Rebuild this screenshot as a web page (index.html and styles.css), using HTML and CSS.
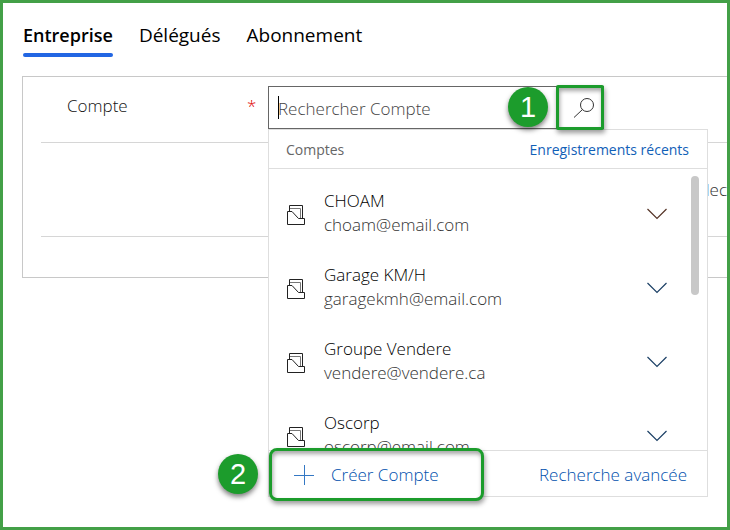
FILE: index.html
```html
<!DOCTYPE html>
<html lang="fr">
<head>
    <meta charset="UTF-8">
    <meta name="viewport" content="width=device-width, initial-scale=1.0">
    <title>Entreprise</title>
    <link rel="stylesheet" href="styles.css">
</head>
<body>
    <svg class="defs" width="0" height="0" aria-hidden="true">
        <symbol id="icon-account" viewBox="0 0 20 22">
            <path d="M3.500 7V1.500H16.500V14" />
            <path class="grey" d="M4 4.500H14.500V14" />
            <path d="M1.500 20.500V7.500H6L12.500 14.500H18.500V20.500Z" />
        </symbol>
        <symbol id="icon-chevron" viewBox="0 0 20 12">
            <path d="M0.500 1L10 10.500L19.500 1" />
        </symbol>
    </svg>
    <div class="page">
        <nav class="tabs">
            <a href="#entreprise" class="tab active">Entreprise</a>
            <a href="#delegues" class="tab">Délégués</a>
            <a href="#abonnement" class="tab">Abonnement</a>
        </nav>
        <main class="panel">
            <div class="row row-account">
                <label class="label" for="compte">Compte</label>
                <span class="required">*</span>
                <div class="lookup">
                    <div class="search">
                        <input type="text" id="compte" placeholder="Rechercher Compte">
                        <span class="step step-search">1</span>
                        <button class="search-button" aria-label="Rechercher">
                            <svg width="22" height="22" viewBox="0 0 22 22"><circle cx="14" cy="8" r="6.500" /><path d="M9.500 12.500L1 20.500" /></svg>
                        </button>
                    </div>
                    <div class="dropdown">
                        <div class="dropdown-header">
                            <span>Comptes</span>
                            <a href="#recents">Enregistrements récents</a>
                        </div>
                        <div class="results">
                            <div class="result">
                                <svg class="account" width="20" height="22"><use href="#icon-account" /></svg>
                                <div class="result-text">
                                    <div class="name">CHOAM</div>
                                    <div class="email">choam@email.com</div>
                                </div>
                                <svg class="chevron warm" width="20" height="12"><use href="#icon-chevron" /></svg>
                            </div>
                            <div class="result">
                                <svg class="account" width="20" height="22"><use href="#icon-account" /></svg>
                                <div class="result-text">
                                    <div class="name">Garage KM/H</div>
                                    <div class="email">garagekmh@email.com</div>
                                </div>
                                <svg class="chevron" width="20" height="12"><use href="#icon-chevron" /></svg>
                            </div>
                            <div class="result">
                                <svg class="account" width="20" height="22"><use href="#icon-account" /></svg>
                                <div class="result-text">
                                    <div class="name">Groupe Vendere</div>
                                    <div class="email">vendere@vendere.ca</div>
                                </div>
                                <svg class="chevron" width="20" height="12"><use href="#icon-chevron" /></svg>
                            </div>
                            <div class="result">
                                <svg class="account" width="20" height="22"><use href="#icon-account" /></svg>
                                <div class="result-text">
                                    <div class="name">Oscorp</div>
                                    <div class="email">oscorp@email.com</div>
                                </div>
                                <svg class="chevron" width="20" height="12"><use href="#icon-chevron" /></svg>
                            </div>
                            <span class="scrollbar"></span>
                        </div>
                        <div class="dropdown-footer">
                            <button class="create">
                                <svg width="20" height="20" viewBox="0 0 20 20"><path d="M10.500 0V20M0 10.500H20" /></svg>
                                Créer Compte
                            </button>
                            <a href="#avancee">Recherche avancée</a>
                            <span class="step step-create">2</span>
                        </div>
                    </div>
                </div>
            </div>
            <div class="row row-select">
                <span>lec</span>
            </div>
        </main>
    </div>
</body>
</html>
```
FILE: styles.css
```css
* {
    box-sizing: border-box;
}
body {
    margin: 0;
    font-family: 'Open Sans', 'Noto Sans', sans-serif;
    font-weight: 300;
    font-size: 17px;
    line-height: 24px;
    color: #222;
    background-color: #fff;
}
a {
    color: #0050ad;
    text-decoration: none;
}
svg {
    display: block;
    flex: none;
    fill: none;
}
.defs {
    position: absolute;
}
.page {
    min-height: 100vh;
    border: 3px solid #43a047;
    padding: 20px 0 0 20px;
    overflow: hidden;
}
.tabs {
    display: flex;
    gap: 26px;
    margin-bottom: 19px;
}
.tab {
    color: #000;
    font-size: 19px;
    font-weight: 400;
    padding-bottom: 10px;
}
.tab.active {
    position: relative;
    font-size: 18px;
    font-weight: 600;
}
.tab.active::after {
    content: "";
    position: absolute;
    left: 0;
    right: 0;
    bottom: 0;
    height: 4px;
    border-radius: 2px;
    background-color: #2266e3;
}
.panel {
    margin-left: -1px;
    border: 1px solid #c8c8c8;
    border-right: none;
    padding: 0 0 40px 18px;
}
.row {
    display: flex;
    border-bottom: 1px solid #d6d6d6;
}
.row-account {
    height: 66px;
    padding-top: 9px;
}
.row-select {
    height: 94px;
    align-items: center;
    justify-content: flex-end;
    color: #333;
}
.label {
    width: 206px;
    padding: 8px 0 0 26px;
    color: #111;
}
.required {
    width: 21px;
    padding-top: 8px;
    color: #e00000;
}
.lookup {
    position: relative;
    width: 336px;
}
.search {
    position: relative;
    display: flex;
    height: 43px;
    background-color: #fff;
    border: 1px solid #666;
    border-right: none;
}
.search::before {
    content: "";
    position: absolute;
    left: 9px;
    top: 9px;
    width: 1px;
    height: 23px;
    background-color: #000;
}
.search input {
    flex: 1;
    min-width: 0;
    border: none;
    outline: none;
    padding: 2px 0 0 9px;
    font: inherit;
    background-color: transparent;
}
.search input::placeholder {
    color: #444;
    opacity: 1;
}
.search-button {
    display: flex;
    align-items: center;
    justify-content: center;
    width: 48px;
    margin: -2px 0;
    padding: 0 0 0 7px;
    background-color: #fff;
    border: 3px solid #1c9c2c;
    border-radius: 2px;
    box-shadow: 1px 3px 5px rgba(0, 0, 0, 0.4), inset 1px 3px 4px rgba(0, 0, 0, 0.35);
    z-index: 2;
}
.search-button svg {
    stroke: #333;
}
.step {
    position: absolute;
    width: 40px;
    height: 40px;
    border-radius: 50%;
    background-color: #1c9c2c;
    box-shadow: 0 3px 5px rgba(0, 0, 0, 0.5);
    color: #fff;
    font-family: 'Liberation Sans', sans-serif;
    font-size: 29px;
    font-weight: 400;
    line-height: 40px;
    text-align: center;
    z-index: 2;
}
.step-search {
    right: 56px;
    top: 0;
}
.step-create {
    left: -51px;
    top: 3px;
}
.dropdown {
    position: absolute;
    left: 0;
    top: 43px;
    width: 440px;
    background-color: #fff;
    border: 1px solid #dedede;
    z-index: 1;
}
.dropdown-header {
    display: flex;
    align-items: center;
    justify-content: space-between;
    height: 39px;
    padding: 2px 18px 0 17px;
    border-bottom: 1px solid #dedede;
    font-size: 14px;
    font-weight: 400;
    color: #666;
}
.dropdown-header a {
    color: #1160b7;
}
.results {
    position: relative;
    height: 281px;
    padding: 7px 40px 0 17px;
    overflow: hidden;
}
.result {
    display: flex;
    align-items: center;
    height: 74px;
}
.account {
    stroke: #222;
    margin-top: 4px;
}
.grey {
    stroke: #777;
}
.result-text {
    flex: 1;
    padding-left: 18px;
}
.name {
    color: #000;
}
.email {
    color: #333;
}
.chevron {
    stroke: #1c4066;
    stroke-width: 1.2;
    margin-top: 2px;
}
.chevron.warm {
    stroke: #553326;
}
.scrollbar {
    position: absolute;
    right: 8px;
    top: 7px;
    width: 8px;
    height: 119px;
    border-radius: 4px;
    background-color: #c8c8c8;
}
.dropdown-footer {
    position: relative;
    display: flex;
    align-items: center;
    justify-content: space-between;
    height: 46px;
    padding: 2px 20px 0 0;
    border-top: 1px solid #dedede;
}
.create {
    display: flex;
    align-items: center;
    gap: 17px;
    width: 215px;
    height: 53px;
    padding: 0 0 0 22px;
    background-color: #fff;
    border: 3px solid #1c9c2c;
    border-radius: 8px;
    box-shadow: 1px 3px 5px rgba(0, 0, 0, 0.4), inset 1px 3px 4px rgba(0, 0, 0, 0.35);
    color: #0050ad;
    font: inherit;
}
.create svg {
    stroke: #3478c4;
}
```
